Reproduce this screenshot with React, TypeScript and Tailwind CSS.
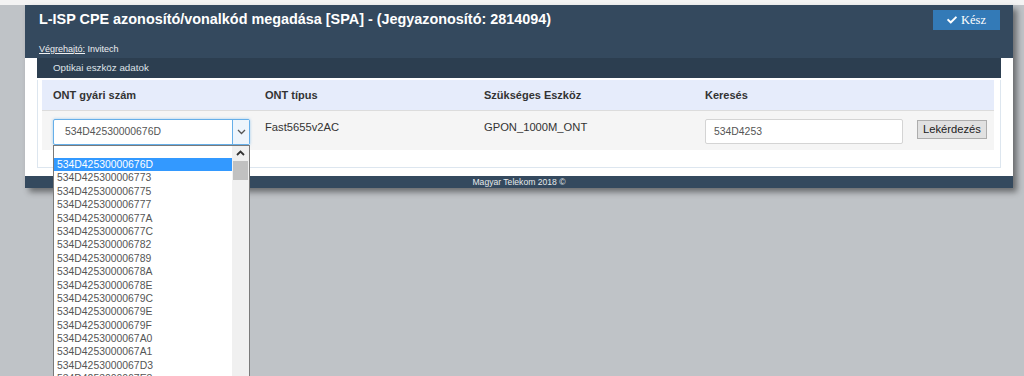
import React from "react";
import { FaCheck } from "react-icons/fa";

const options = [
    "534D42530000676D",
    "534D425300006773",
    "534D425300006775",
    "534D425300006777",
    "534D42530000677A",
    "534D42530000677C",
    "534D425300006782",
    "534D425300006789",
    "534D42530000678A",
    "534D42530000678E",
    "534D42530000679C",
    "534D42530000679E",
    "534D42530000679F",
    "534D4253000067A0",
    "534D4253000067A1",
    "534D4253000067D3",
    "534D4253000067E8",
];

function Chevron({ up }: { up?: boolean }) {
    return (
        <svg width="9" height="6" viewBox="0 0 9 6" fill="none">
            <path
                d={up ? "M1 5L4.5 1.5L8 5" : "M1 1L4.5 4.5L8 1"}
                stroke={up ? "#333" : "#555"}
                strokeWidth={up ? 1.8 : 1.3}
            />
        </svg>
    );
}

function OntSelect() {
    return (
        <div className="relative w-[197px]">
            {/* Select box */}
            <div className="flex h-[26px] border border-[#66afe9] rounded-[2px] bg-white shadow-[0_0_3px_rgba(102,175,233,0.6)]">
                <div className="flex-1 flex items-center pl-[11px] text-[10.4px] text-[#555]">534D42530000676D</div>
                <div className="w-[17px] flex items-center justify-center border-l border-[#66afe9] bg-[#eef5fc]">
                    <Chevron />
                </div>
            </div>

            {/* Opened option list */}
            <div className="absolute left-0 top-[26px] w-[197px] h-[260px] flex border border-[#7a7a7a] bg-white z-10">
                <div className="flex-1 flex flex-col text-[10.4px] leading-[13.4px] text-[#555]">
                    <div className="h-[12px]" />
                    {options.map((o, i) => (
                        <div
                            key={o}
                            className={`pl-[3px] h-[13.4px] ${i === 0 ? "bg-[#3399ff] text-white" : ""}`}
                        >
                            {o}
                        </div>
                    ))}
                </div>
                <div className="w-[17px] flex flex-col bg-[#f0f0f0]">
                    <div className="h-[14px] flex items-center justify-center">
                        <Chevron up />
                    </div>
                    <div className="mx-[1px] mt-[1px] h-[19px] bg-[#c1c1c1]" />
                </div>
            </div>
        </div>
    );
}

export default function App() {
    return (
        <div className="w-full h-[376px] overflow-hidden bg-[#bfc3c7] font-['Liberation_Sans',Arial,sans-serif]">
            <div className="h-[5px] bg-[#f3f3f3]" />

            {/* Modal */}
            <div className="ml-[25px] w-[988px] shadow-[4px_4px_6px_rgba(0,0,0,0.45)]">
                {/* Header */}
                <div className="h-[53px] bg-[#34495e] flex flex-col justify-between px-[14px] pt-[6px] pb-[2px]">
                    <div className="flex items-start justify-between">
                        <h1 className="text-[14.4px] font-bold text-white leading-[14px] pt-[1px]">
                            L-ISP CPE azonosító/vonalkód megadása [SPA] - (Jegyazonosító: 2814094)
                        </h1>
                        <button className="mr-[-1px] mt-[-1px] w-[67px] h-[20px] bg-[#337ab7] text-white text-[12.5px] font-['Liberation_Serif',serif] flex items-center justify-center gap-[4px]">
                            <FaCheck className="w-[10px] h-[10px]" />
                            Kész
                        </button>
                    </div>
                    <div className="text-[9px] text-[#eef0f2]">
                        <span className="underline">Végrehajtó:</span> Invitech
                    </div>
                </div>

                {/* Body */}
                <div className="bg-white px-[12px] pb-[8px]">
                    <div className="h-[20px] bg-[#2c3e50] text-[9.8px] text-[#dfe3e8] pl-[16px] flex items-center">
                        Optikai eszköz adatok
                    </div>
                    <div className="border border-t-0 border-[#dde6ef] bg-white pl-[4px] pr-[6px] pb-[17px]">
                        <div className="grid grid-cols-[212px_219px_221px_1fr] h-[31px] mt-[2px] bg-[#e6ecfb] items-center text-[11px] font-bold text-[#333] border-b border-[#dcdcdc]">
                            <div className="pl-[11px]">ONT gyári szám</div>
                            <div className="pl-[11px]">ONT típus</div>
                            <div className="pl-[11px]">Szükséges Eszköz</div>
                            <div className="pl-[11px]">Keresés</div>
                        </div>
                        <div className="grid grid-cols-[212px_219px_221px_1fr] h-[39px] bg-[#f5f5f5] items-start text-[11.2px] text-[#333] pt-[8px]">
                            <div className="pl-[11px]">
                                <OntSelect />
                            </div>
                            <div className="pl-[11px] leading-[16px]">Fast5655v2AC</div>
                            <div className="pl-[11px] leading-[16px]">GPON_1000M_ONT</div>
                            <div className="pl-[11px] flex gap-[14px]">
                                <div className="w-[198px] h-[25px] border border-[#d4d4d4] rounded-[2px] bg-white flex items-center pl-[8px] text-[10.4px] text-[#555]">
                                    534D4253
                                </div>
                                <button className="mt-[1px] h-[19px] px-[5px] bg-[#e1e1e1] border border-[#adadad] text-[11.2px] text-[#222] leading-none">
                                    Lekérdezés
                                </button>
                            </div>
                        </div>
                    </div>
                </div>

                {/* Footer */}
                <div className="h-[12px] bg-[#34495e] flex items-center justify-center text-[8.6px] text-[#e6e9ec]">
                    Magyar Telekom 2018 ©
                </div>
            </div>
        </div>
    );
}
